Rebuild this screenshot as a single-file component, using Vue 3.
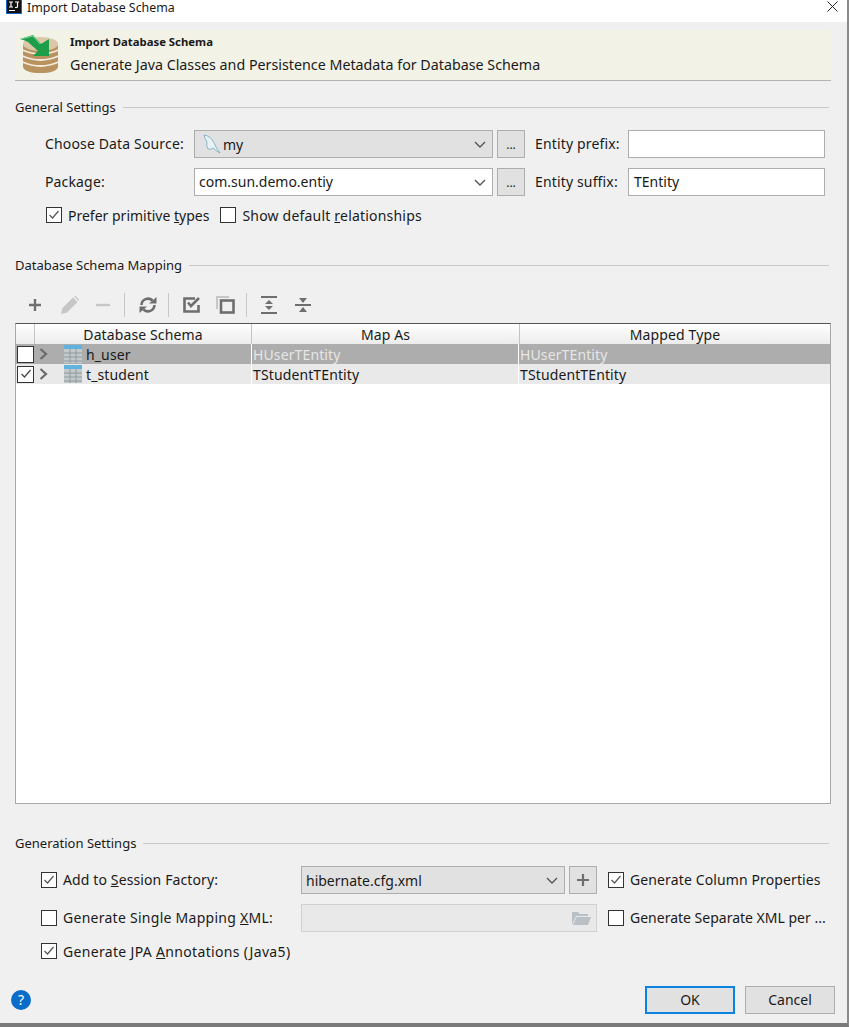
<template>
  <div class="dialog">
    <div class="titlebar">
      <svg class="ij" width="16" height="14" viewBox="0 0 16 14">
        <rect x="0" y="0" width="16" height="14" fill="#1565c0" />
        <rect x="1" y="0" width="14" height="13" fill="#111" />
        <path d="M3 2h4M5 2v5M3 7h4M9 2h4M11.5 2v4.5q0 1-1 1H9" stroke="#fff" stroke-width="1.2" fill="none" />
        <rect x="3" y="10" width="6" height="1" fill="#fff" />
      </svg>
      <span class="title">Import Database Schema</span>
      <svg class="close" width="11" height="11" viewBox="0 0 11 11">
        <path d="M.5 .5l10 10M10.500 .5l-10 10" stroke="#222" stroke-width="1" fill="none" />
      </svg>
    </div>

    <div class="banner">
      <svg class="banner-icon" width="40" height="40" viewBox="0 0 40 40">
        <path d="M3 9h35v23q-2 6-17.500 6T3 32z" fill="#b8935f" />
        <ellipse cx="20.500" cy="9" rx="17.500" ry="7" fill="#dcc8a8" />
        <path d="M2.500 15q18 8 36 0M2.500 21q18 8 36 0M2.500 27q18 8 36 0" stroke="#f4ecdf" stroke-width="1.800" fill="none" />
        <path d="M0 4L13 0l8 9 8-5v17H13l5-5L8 7Q4 5 0 4z" fill="#1d9f49" />
        <path d="M1 4L13 1l7 8" stroke="#7ad89a" stroke-width="1" fill="none" />
      </svg>
      <div class="banner-text">
        <div class="banner-title">Import Database Schema</div>
        <div class="banner-sub">Generate Java Classes and Persistence Metadata for Database Schema</div>
      </div>
    </div>

    <div class="group-title general"><span>General Settings</span><i></i></div>

    <div class="general-form">
      <label class="lbl">Choose Data Source:</label>
      <div class="combo grey">
        <svg width="24" height="22" viewBox="0 0 24 22" class="dolphin">
          <path d="M5 2q7 1 10 8t6 10q-4-2-7-5-2 2-5 1-2-3-1-7Q6 6 5 2z" fill="#e8f2f5" stroke="#6aa9bf" stroke-width="0.8" />
        </svg>
        <span class="my">my</span>
        <svg class="chev" width="12" height="7" viewBox="0 0 12 7"><path d="M1 1l5 5 5-5" stroke="#555" stroke-width="1.4" fill="none" /></svg>
      </div>
      <div class="btn-small">...</div>
      <label class="lbl side">Entity prefix:</label>
      <div class="input"></div>

      <label class="lbl">Package:</label>
      <div class="combo white">
        <span class="pkg">com.sun.demo.entiy</span>
        <svg class="chev" width="12" height="7" viewBox="0 0 12 7"><path d="M1 1l5 5 5-5" stroke="#555" stroke-width="1.4" fill="none" /></svg>
      </div>
      <div class="btn-small">...</div>
      <label class="lbl side">Entity suffix:</label>
      <div class="input">TEntity</div>
    </div>

    <div class="check-row prefer">
      <span class="cb"><svg width="14" height="14" viewBox="0 0 14 14"><path d="M2.500 7l3 3 6-7" stroke="#555" stroke-width="1.200" fill="none" /></svg></span>
      <span class="cb-label">Prefer primitive <u>t</u>ypes</span>
      <span class="cb second"></span>
      <span class="cb-label show">Show default <u>r</u>elationships</span>
    </div>

    <div class="group-title mapping"><span>Database Schema Mapping</span><i></i></div>

    <div class="toolbar">
      <svg width="14" height="14" viewBox="0 0 14 14" class="t-plus"><path d="M7 1v12M1 7h12" stroke="#6e6e6e" stroke-width="2.400" /></svg>
      <svg width="18" height="18" viewBox="0 0 18 18" class="t-pencil"><path d="M0 18l1.500-6L12 1.500 16.500 6 6 16.500zM13 .5l1.500-.5L18 3.500 17.500 5z" fill="#c6c6c6" /></svg>
      <svg width="14" height="14" viewBox="0 0 14 14" class="t-minus"><path d="M0 7h14" stroke="#c6c6c6" stroke-width="2.400" /></svg>
      <span class="sep s1"></span>
      <svg width="18" height="18" viewBox="0 0 18 18" class="t-sync">
        <path d="M2.500 9a6.500 6.500 0 0 1 11-4.500M15.500 9a6.500 6.500 0 0 1-11 4.500" stroke="#6e6e6e" stroke-width="2.600" fill="none" />
        <path d="M10 7.500h7.500V1zM8 10.500H.5V17z" fill="#6e6e6e" />
      </svg>
      <span class="sep s2"></span>
      <svg width="18" height="16" viewBox="0 0 18 16" class="t-check">
        <path d="M15.500 8v6.500H1.500V1.500H12" stroke="#6e6e6e" stroke-width="2.600" fill="none" />
        <path d="M5 5.500l3 3.500 8-8" stroke="#6e6e6e" stroke-width="2.600" fill="none" />
      </svg>
      <svg width="19" height="18" viewBox="0 0 19 18" class="t-copy">
        <path d="M1 13V1h12" stroke="#c6c6c6" stroke-width="2" fill="none" />
        <rect x="5" y="4.500" width="12.500" height="12" stroke="#6e6e6e" stroke-width="2.600" fill="none" />
      </svg>
      <span class="sep s3"></span>
      <svg width="16" height="18" viewBox="0 0 16 18" class="t-expand">
        <path d="M0 1h16M0 17h16" stroke="#6e6e6e" stroke-width="2" />
        <path d="M8 4l4 4H4zM8 14l4-4H4z" fill="#6e6e6e" />
      </svg>
      <svg width="16" height="16" viewBox="0 0 16 16" class="t-collapse">
        <path d="M0 8h16" stroke="#6e6e6e" stroke-width="2" />
        <path d="M8 6L4 1h8zM8 10l4 5H4z" fill="#6e6e6e" />
      </svg>
    </div>

    <div class="table">
      <div class="thead">
        <div class="th c0"></div>
        <div class="th c1">Database Schema</div>
        <div class="th c2">Map As</div>
        <div class="th c3">Mapped Type</div>
      </div>
      <div v-for="row in rows" :key="row.name" :class="['tr', { selected: row.selected }]">
        <div class="td c0">
          <span class="cb dark">
            <svg v-if="row.checked" width="14" height="14" viewBox="0 0 14 14"><path d="M2.500 7l3 3 6-7" stroke="#444" stroke-width="1.200" fill="none" /></svg>
          </span>
        </div>
        <div class="td c1 name">
          <svg class="arrow" width="9" height="12" viewBox="0 0 9 12"><path d="M1.500 1l5.500 5-5.500 5" stroke="#6a6a6a" stroke-width="2.200" fill="none" /></svg>
          <svg class="table-icon" width="18" height="18" viewBox="0 0 18 18">
            <rect x="0" y="0" width="18" height="18" fill="#c4cacc" />
            <rect x="0" y="0" width="18" height="4" fill="#5fb3dc" />
            <path d="M6 4v14M12 4v14M0 8h18M0 12h18M0 16h18" stroke="#8f9a9f" stroke-width="1" />
          </svg>
          <span>{{ row.name }}</span>
        </div>
        <div class="td c2 val">{{ row.map }}</div>
        <div class="td c3 val">{{ row.type }}</div>
      </div>
    </div>

    <div class="group-title generation"><span>Generation Settings</span><i></i></div>

    <div class="gen-form">
      <span class="cb"><svg width="14" height="14" viewBox="0 0 14 14"><path d="M2.500 7l3 3 6-7" stroke="#555" stroke-width="1.200" fill="none" /></svg></span>
      <span class="cb-label wide1">Add to <u>S</u>ession Factory:</span>
      <div class="combo grey">
        <span>hibernate.cfg.xml</span>
        <svg class="chev" width="12" height="7" viewBox="0 0 12 7"><path d="M1 1l5 5 5-5" stroke="#555" stroke-width="1.400" fill="none" /></svg>
      </div>
      <div class="btn-small plus">
        <svg width="14" height="14" viewBox="0 0 14 14"><path d="M7 1v12M1 7h12" stroke="#6e6e6e" stroke-width="2.200" /></svg>
      </div>
      <span class="cb"><svg width="14" height="14" viewBox="0 0 14 14"><path d="M2.500 7l3 3 6-7" stroke="#555" stroke-width="1.200" fill="none" /></svg></span>
      <span class="cb-label wide1">Generate Column Properties</span>

      <span class="cb"></span>
      <span class="cb-label wide2">Generate Single Mapping <u>X</u>ML:</span>
      <div class="path-field">
        <svg width="19" height="15" viewBox="0 0 19 15"><path d="M0 14V1h6l2 2h8v2H4zM4.500 6H19l-3 8H1z" fill="#b9c1c6" /></svg>
      </div>
      <span class="cb"></span>
      <span class="cb-label">Generate Separate XML per ...</span>
    </div>

    <div class="check-row jpa">
      <span class="cb"><svg width="14" height="14" viewBox="0 0 14 14"><path d="M2.500 7l3 3 6-7" stroke="#555" stroke-width="1.200" fill="none" /></svg></span>
      <span class="cb-label wide3">Generate JPA <u>A</u>nnotations (Java5)</span>
    </div>

    <div class="footer">
      <span class="help">?</span>
      <button class="btn ok">OK</button>
      <button class="btn">Cancel</button>
    </div>
  </div>
</template>

<script setup>
const rows = [
  { name: "h_user", map: "HUserTEntity", type: "HUserTEntity", checked: false, selected: true },
  { name: "t_student", map: "TStudentTEntity", type: "TStudentTEntity", checked: true, selected: false }
];
</script>

<style>
html, body {
  margin: 0;
  background: #f0f0f0;
}
</style>

<style scoped>
.dialog {
  box-sizing: border-box;
  width: 849px;
  height: 1027px;
  background: #f0f0f0;
  border-right: 2px solid #8a8a8a;
  border-bottom: 4px solid #7a7a7a;
  font-family: "Noto Sans", "Open Sans", sans-serif;
  font-size: 14px;
  color: #1a1a1a;
  display: flex;
  flex-direction: column;
  overflow: hidden;
}

.titlebar {
  height: 22px;
  flex: none;
  background: #fff;
  display: flex;
  align-items: flex-start;
  padding-left: 6px;
  font-size: 12.400px;
}
.ij { flex: none; }
.title { margin-left: 5px; line-height: 15px; }
.close { margin-left: auto; margin-right: 9px; margin-top: 1px; }

.banner {
  box-sizing: border-box;
  height: 51px;
  margin: 8px 16px 0 15px;
  flex: none;
  background: #f2f2e6;
  border-bottom: 1px solid #b4b4b4;
  display: flex;
  align-items: center;
  padding-left: 5px;
}
.banner-icon { flex: none; }
.banner-text { margin-left: 10px; }
.banner-title { font-size: 11.350px; font-weight: 700; line-height: 16px; }
.banner-sub { font-size: 14.270px; line-height: 22px; margin-top: 4px; }

.group-title {
  display: flex;
  align-items: center;
  margin: 0 18px 0 15px;
  height: 20px;
  font-size: 13px;
  flex: none;
}
.group-title i {
  flex: 1;
  height: 1px;
  background: #c8c8c8;
  margin-left: 7px;
}
.general { margin-top: 16px; }
.mapping { margin-top: 32px; }
.generation { margin-top: 29px; }

.general-form {
  margin: 13px 0 0 45px;
  display: grid;
  grid-template-columns: 149px 299px 32px 103px 197px;
  grid-auto-rows: 28px;
  row-gap: 10px;
  align-items: center;
}
.general-form .btn-small { margin-left: 4px; }
.lbl { letter-spacing: 0.15px; margin-bottom: 2px; }
.lbl.side { padding-left: 10px; }
.pkg { margin-bottom: 2px; }

.combo {
  box-sizing: border-box;
  height: 28px;
  border: 1px solid #adadad;
  display: flex;
  align-items: center;
  padding-left: 4px;
}
.combo.grey { background: #e1e1e1; }
.combo.white { background: #fff; }
.chev { margin-left: auto; margin-right: 6px; flex: none; }
.dolphin { flex: none; }

.btn-small {
  box-sizing: border-box;
  width: 28px;
  height: 28px;
  background: #e1e1e1;
  border: 1px solid #adadad;
  display: flex;
  align-items: center;
  justify-content: center;
  font-size: 12px;
}
.input {
  box-sizing: border-box;
  height: 28px;
  background: #fff;
  border: 1px solid #adadad;
  padding-left: 5px;
  line-height: 26px;
}

.check-row {
  display: flex;
  align-items: center;
  flex: none;
}
.prefer { margin: 11px 0 0 46px; height: 16px; }
.second { margin-left: 11px; }
.cb {
  box-sizing: border-box;
  width: 16px;
  height: 16px;
  background: #fff;
  border: 1px solid #333;
  flex: none;
  display: flex;
  align-items: center;
  justify-content: center;
}
.cb-label { margin-left: 6px; white-space: nowrap; }
.show { letter-spacing: 0.2px; }
.wide1 { letter-spacing: 0.12px; }
.wide2 { letter-spacing: 0.27px; }
.wide3 { letter-spacing: 0.33px; }

.toolbar {
  box-sizing: border-box;
  height: 48px;
  padding-top: 12px;
  margin-left: 15px;
  display: flex;
  align-items: center;
  flex: none;
}
.toolbar svg { flex: none; }
.t-plus { margin-left: 13px; }
.t-pencil { margin-left: 19px; }
.t-minus { margin-left: 17px; }
.sep { width: 1px; height: 24px; background: #c8c8c8; flex: none; }
.s1 { margin-left: 14px; }
.t-sync { margin-left: 14px; }
.s2 { margin-left: 11px; }
.t-check { margin-left: 14px; }
.t-copy { margin-left: 15px; }
.s3 { margin-left: 11px; }
.t-expand { margin-left: 14px; }
.t-collapse { margin-left: 18px; }

.table {
  box-sizing: border-box;
  flex: none;
  height: 481px;
  margin: 0 16px 0 15px;
  background: #fff;
  border: 1px solid #a8a8a8;
  border-top: 1px solid #555;
  letter-spacing: 0.12px;
}
.thead {
  display: flex;
  height: 20px;
  background: linear-gradient(#ffffff, #ececec);
}
.th {
  box-sizing: border-box;
  border-right: 1px solid #c4c4c4;
  text-align: center;
  line-height: 21px;
}
.c0 { width: 19px; flex: none; }
.c1 { width: 217px; flex: none; }
.c2 { width: 268px; flex: none; }
.c3 { flex: 1; }
.th.c3 { border-right: none; }

.tr {
  display: flex;
  height: 20px;
  background: #e9e9e9;
}
.tr.selected { background: #adadad; }
.tr.selected .val { color: #e6e6e6; }
.td { box-sizing: border-box; line-height: 21px; }
.td.c0 { display: flex; align-items: center; padding-left: 1px; }
.td.c0 .cb { width: 17px; height: 17px; }
.td.c2, .td.c3 { border-left: 1px solid #fff; margin-left: -1px; padding-left: 1px; }
.td.c2 { width: 268px; }
.name { display: flex; align-items: center; }
.arrow { margin-left: 4px; flex: none; }
.table-icon { margin-left: 16px; flex: none; }
.name span { margin-left: 4px; }

.gen-form {
  margin: 13px 0 0 41px;
  display: grid;
  grid-template-columns: 22px 238px 264px 32px 22px auto;
  grid-auto-rows: 28px;
  row-gap: 10px;
  align-items: center;
}
.gen-form .cb-label { margin-left: 0; margin-bottom: 2px; }
.gen-form .btn-small { margin-left: 4px; }
.gen-form .cb:nth-child(5), .gen-form .cb:nth-child(10) { margin-left: 11px; }
.gen-form .cb-label:nth-child(6), .gen-form .cb-label:nth-child(11) { margin-left: 11px; }
.path-field {
  box-sizing: border-box;
  grid-column: span 2;
  width: 296px;
  height: 28px;
  background: #e9e9e9;
  border: 1px solid #d0d0d0;
  display: flex;
  align-items: center;
  justify-content: flex-end;
  padding-right: 5px;
}

.jpa { margin: 11px 0 0 41px; height: 16px; }

.footer {
  margin-top: auto;
  height: 28px;
  margin-bottom: 9px;
  padding: 0 12px 0 11px;
  display: flex;
  align-items: center;
  flex: none;
}
.help {
  width: 20px;
  height: 20px;
  border-radius: 50%;
  background: #0a6cc9;
  color: #fff;
  text-align: center;
  line-height: 20px;
  font-size: 14px;
}
.btn {
  box-sizing: border-box;
  width: 90px;
  height: 28px;
  background: #e1e1e1;
  border: 1px solid #adadad;
  font: inherit;
  color: inherit;
  margin-left: 10px;
  padding: 0 0 2px;
}
.btn.ok {
  margin-left: auto;
  border: 2px solid #0a84e0;
}
</style>
